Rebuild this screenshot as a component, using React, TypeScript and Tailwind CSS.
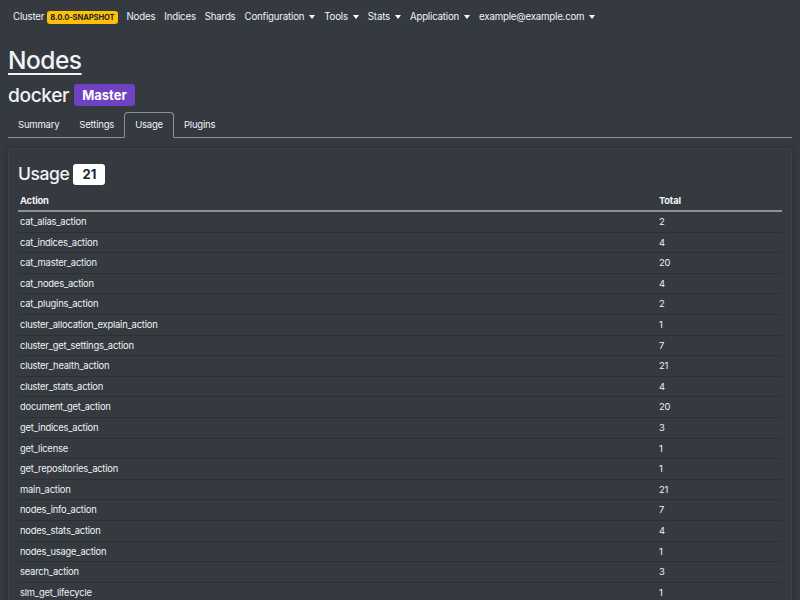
import React from "react";

const ROWS: [string, number][] = [
  ["cat_alias_action", 2],
  ["cat_indices_action", 4],
  ["cat_master_action", 20],
  ["cat_nodes_action", 4],
  ["cat_plugins_action", 2],
  ["cluster_allocation_explain_action", 1],
  ["cluster_get_settings_action", 7],
  ["cluster_health_action", 21],
  ["cluster_stats_action", 4],
  ["document_get_action", 20],
  ["get_indices_action", 3],
  ["get_license", 1],
  ["get_repositories_action", 1],
  ["main_action", 21],
  ["nodes_info_action", 7],
  ["nodes_stats_action", 4],
  ["nodes_usage_action", 1],
  ["search_action", 3],
  ["slm_get_lifecycle", 1],
  ["xpack_info_action", 2],
  ["xpack_usage_action", 1],
];

function Caret() {
  return <span className="ml-[5px] inline-block h-0 w-0 border-x-[3px] border-t-[4px] border-x-transparent border-t-white" />;
}

const NAV: { label: string; dropdown?: boolean }[] = [
  { label: "Nodes" },
  { label: "Indices" },
  { label: "Shards" },
  { label: "Configuration", dropdown: true },
  { label: "Tools", dropdown: true },
  { label: "Stats", dropdown: true },
  { label: "Application", dropdown: true },
  { label: "example@example.com", dropdown: true },
];

export default function App() {
  return (
    <div className="min-h-[600px] overflow-hidden bg-[#343a40] text-[#f1f3f5] font-['Inter',sans-serif] tracking-[-0.2px]">
      <nav className="flex h-[35px] items-center gap-[9px] px-[13px] text-[9.7px]">
        <div className="flex items-center gap-[3px]">
          <span>Cluster</span>
          <span className="rounded-[3px] bg-[#ffc107] px-[3px] py-[2px] text-[7.6px] font-bold leading-[9px] tracking-[-0.1px] text-[#212529]">
            8.0.0-SNAPSHOT
          </span>
        </div>
        {NAV.map((item) => (
          <span key={item.label} className="flex items-center">
            {item.label}
            {item.dropdown && <Caret />}
          </span>
        ))}
      </nav>

      <div className="px-[8px]">
        <h1 className="mt-[10px] text-[24.5px] font-medium leading-[30px] tracking-[-0.5px] underline decoration-[2px] underline-offset-[4px]">
          Nodes
        </h1>
        <div className="mt-[8px] flex items-center gap-[5px]">
          <h2 className="text-[19.2px] font-medium leading-[24px] tracking-[-0.4px]">docker</h2>
          <span className="rounded-[3px] bg-[#6f42c1] px-[8px] py-[4px] text-[13px] font-bold leading-[14px] tracking-normal text-white">
            Master
          </span>
        </div>

        <div className="mt-[5px] flex border-b border-[#8c9196] text-[9.5px]">
          {["Summary", "Settings", "Usage", "Plugins"].map((t) => (
            <div
              key={t}
              className={
                t === "Usage"
                  ? "-mb-px rounded-t-[4px] border border-b-[#343a40] border-[#8c9196] px-[10px] py-[6px] leading-[12px]"
                  : "-mb-px border border-transparent px-[9px] py-[6px] leading-[12px]"
              }
            >
              {t}
            </div>
          ))}
        </div>

        <div className="mt-[10px] rounded-[4px] border border-[#3b4148] bg-[#343a40] px-[9px] pt-[14px] shadow-[0_0_6px_rgba(0,0,0,0.25)]">
          <div className="flex items-center gap-[4px]">
            <h3 className="text-[17.5px] font-medium leading-[22px] tracking-[-0.4px]">Usage</h3>
            <span className="rounded-[3px] bg-white px-[9px] py-[3px] text-[13px] font-bold leading-[15px] tracking-normal text-[#212529]">
              21
            </span>
          </div>
          <table className="mt-[9px] w-full text-[9.4px]">
            <thead>
              <tr className="border-b-2 border-[#8c9196]">
                <th className="px-[2px] pb-[3px] text-left font-bold leading-[13px]">Action</th>
                <th className="w-[125px] px-[2px] pb-[3px] text-left font-bold leading-[13px]">Total</th>
              </tr>
            </thead>
            <tbody>
              {ROWS.map(([name, total]) => (
                <tr key={name} className="border-b border-[#2b3035]">
                  <td className="px-[2px] py-[3px] leading-[13.6px]">{name}</td>
                  <td className="px-[2px] py-[3px] leading-[13.6px]">{total}</td>
                </tr>
              ))}
            </tbody>
          </table>
        </div>
      </div>
    </div>
  );
}
